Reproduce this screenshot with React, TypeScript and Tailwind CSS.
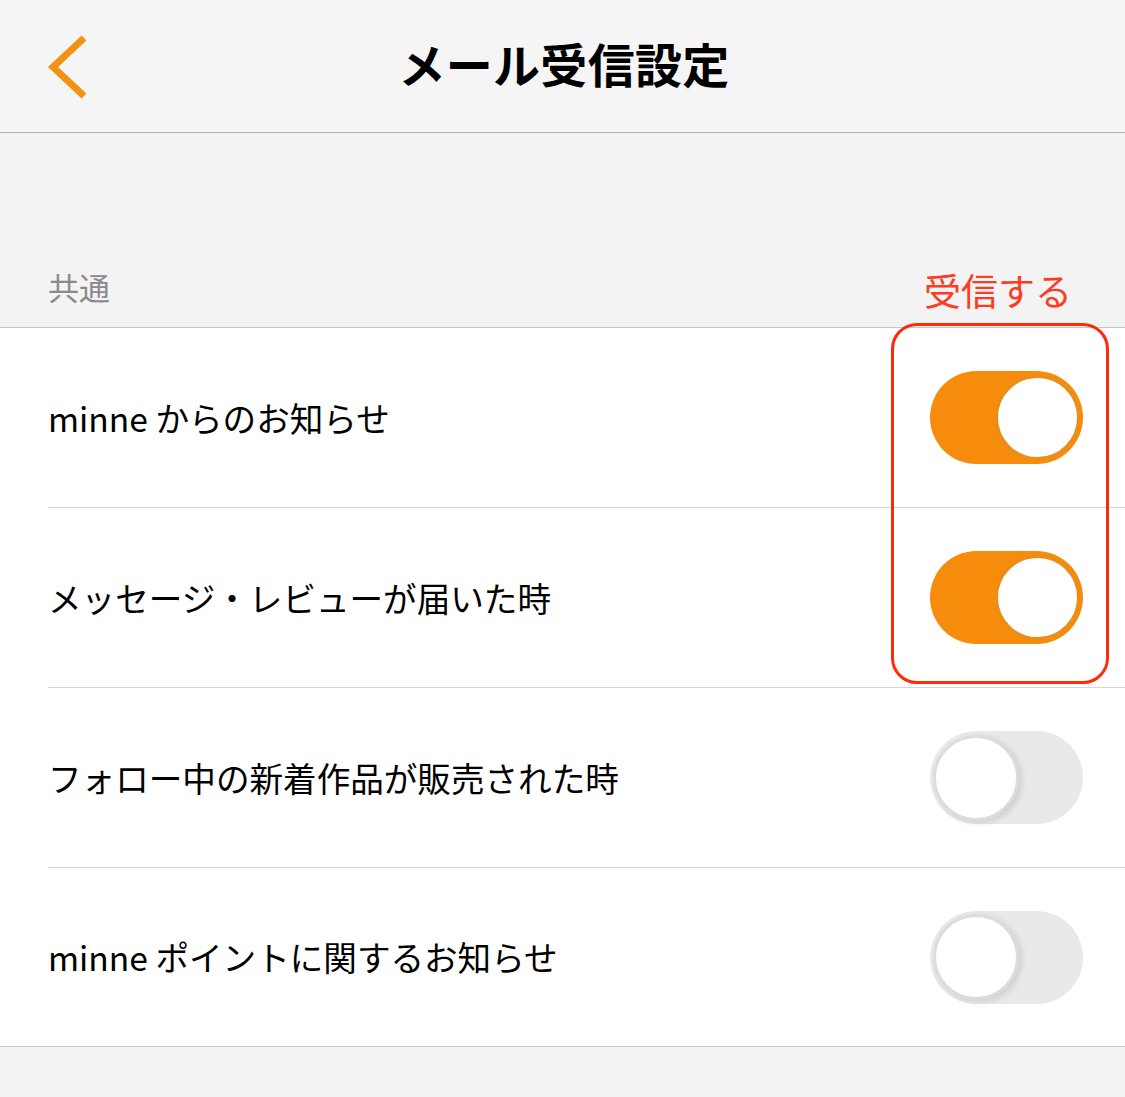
import React from 'react';

type Item = { label: string; on: boolean };

const items: Item[] = [
  { label: 'minne からのお知らせ', on: true },
  { label: 'メッセージ・レビューが届いた時', on: true },
  { label: 'フォロー中の新着作品が販売された時', on: false },
  { label: 'minne ポイントに関するお知らせ', on: false },
];

const Toggle: React.FC<{ on: boolean }> = ({ on }) => {
  if (on) {
    return (
      <div className="w-[153px] h-[93px] rounded-full bg-[#f68b0c] flex items-center justify-end pr-[3px]">
        <div className="w-[85px] h-[85px] rounded-full bg-white border-[3px] border-[#e88f1a]" />
      </div>
    );
  }
  return (
    <div className="w-[153px] h-[93px] rounded-full bg-[#e9e9eb] flex items-center pl-[3px]">
      <div className="w-[86px] h-[86px] rounded-full bg-white border-[3px] border-[#dcdcdc] shadow-[3px_2px_6px_rgba(0,0,0,0.12)]" />
    </div>
  );
};

const MailSettings: React.FC = () => {
  return (
    <div
      className="w-[1125px] h-[1097px] bg-[#f3f3f3] overflow-hidden"
      style={{ fontFamily: '"Noto Sans CJK JP", "Noto Sans", sans-serif' }}
    >
      {/* header */}
      <div className="h-[133px] bg-[#f5f5f5] border-b border-[#b3b3b3] relative flex items-center justify-center">
        <svg className="absolute left-[44px] top-[33px] w-[48px] h-[68px]" viewBox="0 0 48 68" fill="none">
          <path d="M40 5 L9 34 L40 63" stroke="#f39212" strokeWidth={7} strokeLinecap="butt" strokeLinejoin="miter" />
        </svg>
        <h1 className="text-[47px] font-bold text-black tracking-[0.3px] leading-none mb-[8px] ml-[3px]">メール受信設定</h1>
      </div>

      {/* section header */}
      <div className="h-[194px] flex items-end justify-between pl-12 pr-[53px]">
        <span className="text-[31px] leading-[40px] text-[#8a8a8e] mb-[20px]">共通</span>
        <span className="text-[37px] leading-[44px] text-[#ff3b1f] mb-[15px]">受信する</span>
      </div>

      {/* list */}
      <div className="relative bg-white border-t border-b border-[#c8c8cc]">
        {items.map((item, i) => (
          <div key={item.label} className="pl-12">
            <div
              className={
                'flex items-center justify-between pr-[42px] ' +
                (i < items.length - 1 ? 'h-[180px] border-b border-[#d5d5d8]' : 'h-[178px]')
              }
            >
              <span className="text-[33.6px] text-black leading-none">{item.label}</span>
              <Toggle on={item.on} />
            </div>
          </div>
        ))}
        <div className="absolute left-[891px] top-[-5px] w-[218px] h-[361px] rounded-[26px] border-[3px] border-[#ff2a0a]" />
      </div>
    </div>
  );
};

export default function App() {
  return <MailSettings />;
}
